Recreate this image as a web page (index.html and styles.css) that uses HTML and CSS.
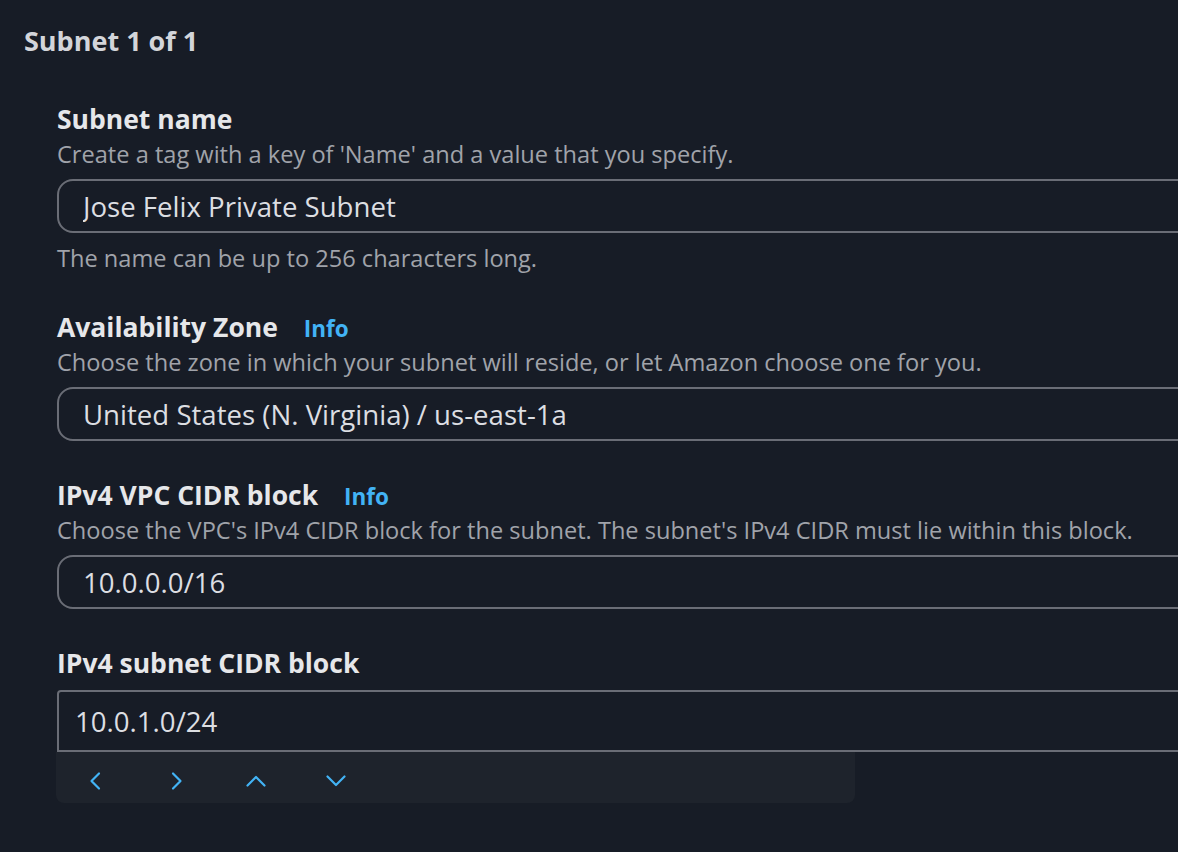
FILE: index.html
```html
<!DOCTYPE html>
<html lang="en">
<head>
  <meta charset="UTF-8">
  <meta name="viewport" content="width=device-width, initial-scale=1.0">
  <title>Create subnet</title>
  <link rel="stylesheet" href="styles.css">
</head>
<body>
  <div class="subnet-card">
    <h2 class="subnet-title">Subnet 1 of 1</h2>

    <div class="fields">
      <!-- Name tag -->
      <div class="field">
        <div class="field-label">Subnet name</div>
        <div class="field-desc">Create a tag with a key of 'Name' and a value that you specify.</div>
        <input class="text-input" type="text" value="Jose Felix Private Subnet">
        <div class="field-hint">The name can be up to 256 characters long.</div>
      </div>

      <!-- Zone -->
      <div class="field">
        <div class="field-label">Availability Zone <a class="info-link" href="#">Info</a></div>
        <div class="field-desc">Choose the zone in which your subnet will reside, or let Amazon choose one for you.</div>
        <div class="select-input">United States (N. Virginia) / us-east-1a</div>
      </div>

      <!-- VPC block -->
      <div class="field">
        <div class="field-label">IPv4 VPC CIDR block <a class="info-link" href="#">Info</a></div>
        <div class="field-desc">Choose the VPC's IPv4 CIDR block for the subnet. The subnet's IPv4 CIDR must lie within this block.</div>
        <div class="select-input">10.0.0.0/16</div>
      </div>

      <!-- Subnet block with the stepper bar -->
      <div class="field">
        <div class="field-label">IPv4 subnet CIDR block</div>
        <input class="text-input cidr-input" type="text" value="10.0.1.0/24">
        <div class="cidr-stepper">
          <button class="step-btn" aria-label="Previous">
            <svg width="20" height="20" viewBox="0 0 20 20"><path d="M13 2.5 L5.5 10 L13 17.5"/></svg>
          </button>
          <button class="step-btn" aria-label="Next">
            <svg width="20" height="20" viewBox="0 0 20 20"><path d="M7 2.5 L14.5 10 L7 17.5"/></svg>
          </button>
          <button class="step-btn" aria-label="Increase">
            <svg width="20" height="20" viewBox="0 0 20 20"><path d="M1.5 14.5 L10 6 L18.5 14.5"/></svg>
          </button>
          <button class="step-btn" aria-label="Decrease">
            <svg width="20" height="20" viewBox="0 0 20 20"><path d="M1.5 5.5 L10 14 L18.5 5.5"/></svg>
          </button>
        </div>
      </div>
    </div>
  </div>
</body>
</html>
```

FILE: styles.css
```css
body {
  margin: 0;
  padding: 0;
  background-color: #171c26;
  font-family: "Open Sans", "Noto Sans", sans-serif;
  color: #e9ebed;
  overflow: hidden;
  height: 100vh;
}
/* Outer subnet container */
.subnet-card {
  padding: 23px 0 0 24px;
}
.subnet-title {
  margin: 0;
  font-size: 27px;
  line-height: 36px;
  font-weight: 700;
  color: #d3d5da;
}
.fields {
  padding-left: 33px;
  margin-top: 42px;
}
.field {
  margin-bottom: 36px;
}
.field-label {
  height: 36px;
  font-size: 26.5px;
  line-height: 36px;
  font-weight: 700;
  color: #e6e7ea;
}
.info-link {
  margin-left: 19px;
  font-size: 22.5px;
  line-height: 1;
  font-weight: 700;
  color: #42b3f5;
  text-decoration: none;
}
.field-desc {
  height: 34px;
  font-size: 23.6px;
  line-height: 34px;
  color: #a0a3aa;
}
.field-hint {
  margin-top: 10px;
  height: 30px;
  font-size: 23.6px;
  line-height: 30px;
  color: #a0a3aa;
}
/* Inputs run past the right edge of the window */
.text-input,
.select-input {
  box-sizing: border-box;
  display: block;
  width: 1200px;
  height: 54px;
  margin-top: 8px;
  padding: 0 24px;
  border: 2px solid #6a6d76;
  border-radius: 16px;
  background: #171c26;
  color: #dcdee2;
  font-family: inherit;
  font-size: 27.6px;
  line-height: 50px;
  outline: none;
}
.cidr-input {
  height: 62px;
  margin-top: 9px;
  padding: 0 16px;
  border-radius: 4px 0 0 0;
}
.cidr-stepper {
  display: flex;
  width: 799px;
  height: 51px;
  margin-left: -1px;
  background: #1e232c;
  border-radius: 0 0 8px 8px;
}
.step-btn {
  box-sizing: border-box;
  width: 80px;
  height: 51px;
  padding: 7px 0 0;
  border: none;
  background: transparent;
  display: flex;
  align-items: center;
  justify-content: center;
  cursor: pointer;
}
.step-btn svg {
  fill: none;
  stroke: #42b3f5;
  stroke-width: 2.2;
  stroke-linecap: round;
  stroke-linejoin: round;
}
```
